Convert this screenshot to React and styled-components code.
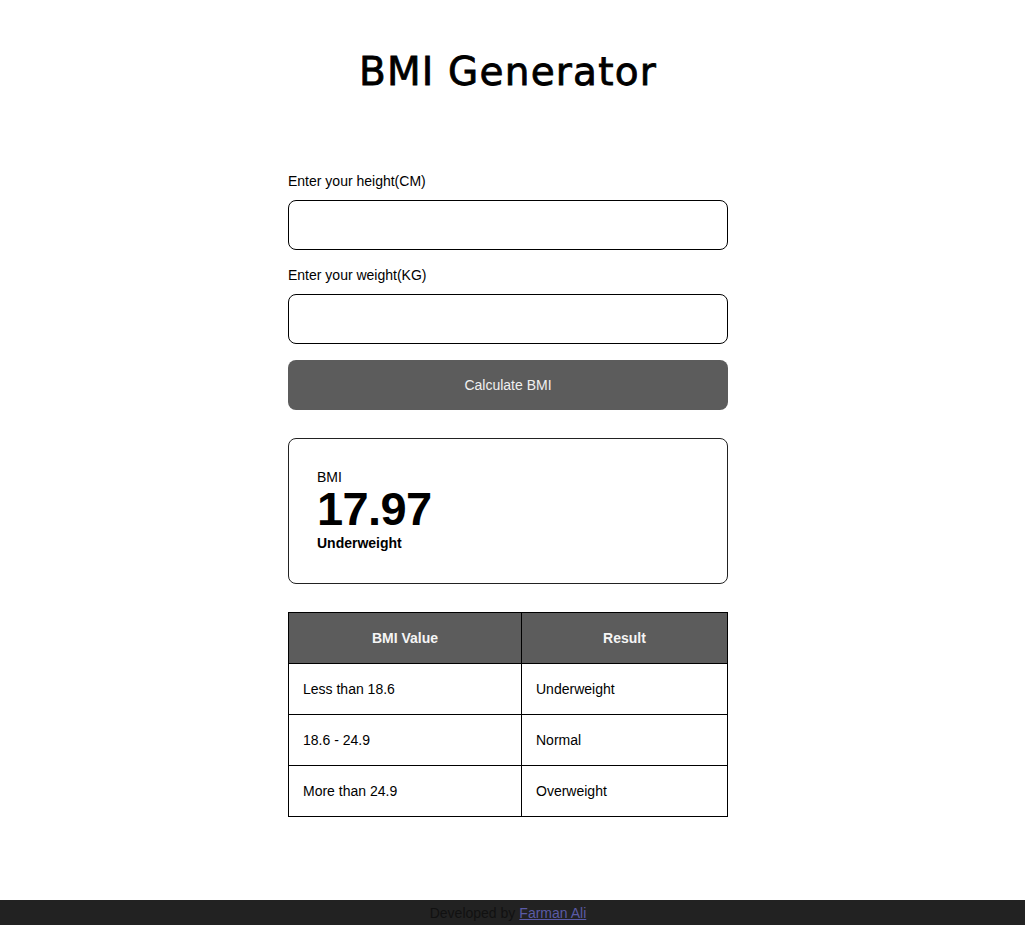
import React, { useState } from 'react';
import styled, { createGlobalStyle } from 'styled-components';

const GlobalStyle = createGlobalStyle`
  html, body {
    margin: 0;
    padding: 0;
    background: #fff;
    font-family: "Liberation Sans", Arial, sans-serif;
    color: #000;
  }
`;

const Page = styled.div`
  min-height: 100vh;
  display: flex;
  flex-direction: column;
`;

const Main = styled.main`
  flex: 1;
  display: flex;
  flex-direction: column;
  align-items: center;
  padding: 0 9px 0 0;
`;

const Title = styled.h1`
  margin: 47px 0 0;
  font-family: "DejaVu Sans", sans-serif;
  font-weight: 400;
  font-size: 39px;
  letter-spacing: 1.2px;
  line-height: 50px;
  -webkit-text-stroke: 0.8px #000;
`;

const Form = styled.form`
  width: 440px;
  margin-top: 76px;
  display: flex;
  flex-direction: column;
`;

const Label = styled.label`
  font-size: 14px;
  line-height: 16px;
  margin: ${(p) => (p.$first ? '0' : '17px')} 0 11px;
`;

const Input = styled.input`
  box-sizing: border-box;
  height: 50px;
  width: 100%;
  border: 1px solid #000;
  border-radius: 8px;
  padding: 0 12px;
  font-size: 14px;
  font-family: inherit;
  outline: none;
`;

const Button = styled.button`
  height: 50px;
  margin-top: 16px;
  border: none;
  border-radius: 8px;
  background: #5c5c5c;
  color: #f0f0f0;
  font-family: inherit;
  font-size: 14px;
  cursor: pointer;
`;

const ResultCard = styled.section`
  box-sizing: border-box;
  width: 440px;
  height: 146px;
  margin-top: 28px;
  border: 1px solid #222;
  border-radius: 8px;
  padding: 30px 28px 0;
`;

const ResultLabel = styled.div`
  font-size: 14px;
  line-height: 16px;
`;

const ResultValue = styled.div`
  font-size: 47px;
  font-weight: 700;
  line-height: 48px;
  letter-spacing: -0.6px;
`;

const ResultText = styled.div`
  font-size: 14px;
  font-weight: 700;
  line-height: 16px;
  margin-top: 2px;
`;

const Table = styled.table`
  width: 440px;
  margin-top: 28px;
  border-collapse: collapse;
  font-size: 14px;
`;

const Th = styled.th`
  height: 50px;
  padding: 0;
  background: #5c5c5c;
  color: #f5f5f5;
  border: 1px solid #000;
  font-weight: 700;
  text-align: center;
  width: ${(p) => p.$w || 'auto'};
`;

const Td = styled.td`
  height: 50px;
  padding: 0 0 0 14px;
  border: 1px solid #000;
`;

const Footer = styled.footer`
  background: #222;
  height: 25px;
  display: flex;
  align-items: center;
  justify-content: center;
  padding-right: 9px;
  font-size: 14px;
  color: #111;
  margin-top: 83px;
`;

const FooterLink = styled.a`
  color: #5b5ba6;
  margin-left: 4px;
`;

const rows = [
  ['Less than 18.6', 'Underweight'],
  ['18.6 - 24.9', 'Normal'],
  ['More than 24.9', 'Overweight'],
];

const App = () => {
  const [height, setHeight] = useState('');
  const [weight, setWeight] = useState('');

  const handleSubmit = (e) => {
    e.preventDefault();
  };

  return (
    <>
      <GlobalStyle />
      <Page>
        <Main>
          <Title>BMI Generator</Title>
          <Form onSubmit={handleSubmit}>
            <Label $first htmlFor="height">Enter your height(CM)</Label>
            <Input id="height" value={height} onChange={(e) => setHeight(e.target.value)} />
            <Label htmlFor="weight">Enter your weight(KG)</Label>
            <Input id="weight" value={weight} onChange={(e) => setWeight(e.target.value)} />
            <Button type="submit">Calculate BMI</Button>
          </Form>
          <ResultCard>
            <ResultLabel>BMI</ResultLabel>
            <ResultValue>17.97</ResultValue>
            <ResultText>Underweight</ResultText>
          </ResultCard>
          <Table>
            <thead>
              <tr>
                <Th $w="232px">BMI Value</Th>
                <Th>Result</Th>
              </tr>
            </thead>
            <tbody>
              {rows.map(([value, result]) => (
                <tr key={value}>
                  <Td>{value}</Td>
                  <Td>{result}</Td>
                </tr>
              ))}
            </tbody>
          </Table>
        </Main>
        <Footer>
          Developed by<FooterLink href="#">Farman Ali</FooterLink>
        </Footer>
      </Page>
    </>
  );
};

export default App;
